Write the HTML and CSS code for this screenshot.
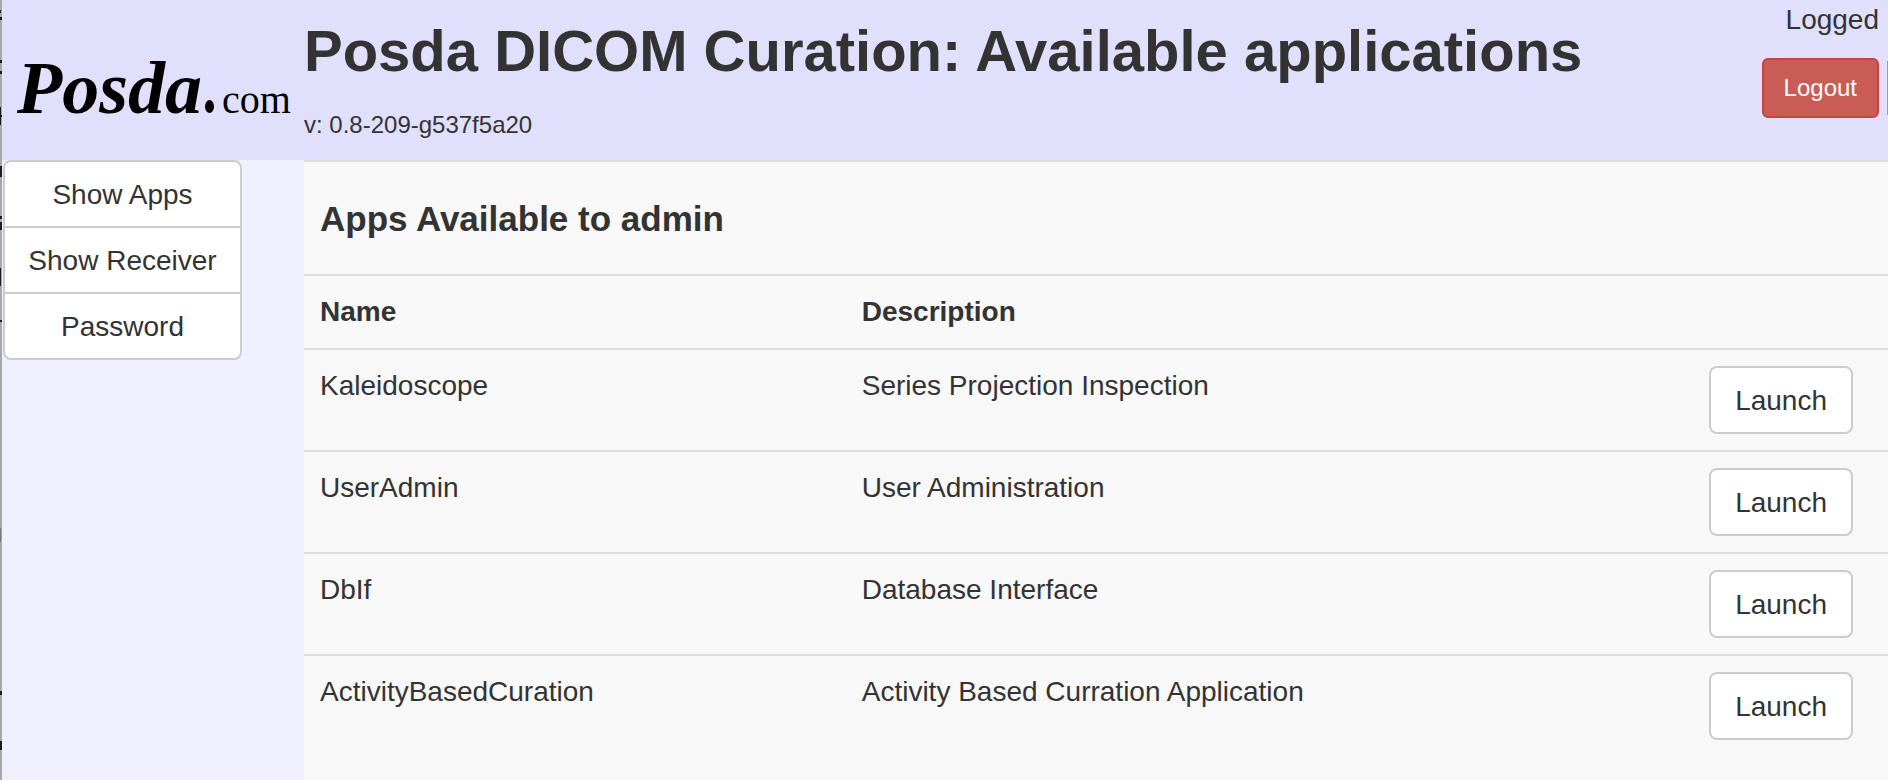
FILE: index.html
```html
<!DOCTYPE html>
<html lang="en">
<head>
<meta charset="utf-8">
<title>Posda DICOM Curation</title>
<link rel="stylesheet" href="styles.css">
</head>
<body>
<header class="header">
  <div class="logo"><span class="logo-name">Posda</span><span class="logo-dot"></span><span class="logo-tld">com</span></div>
  <div class="heading">
    <h1 class="title">Posda DICOM Curation: Available applications</h1>
    <p class="version">v: 0.8-209-g537f5a20</p>
  </div>
  <div class="account">
    <p class="account-status">Logged</p>
    <div class="account-actions">
      <button class="btn-logout" type="button">Logout</button>
      <span class="info-edge"></span>
    </div>
  </div>
</header>
<div class="body">
  <nav class="sidebar">
    <div class="menu">
      <button class="btn" type="button">Show Apps</button>
      <button class="btn" type="button">Show Receiver</button>
      <button class="btn" type="button">Password</button>
    </div>
  </nav>
  <main class="content">
    <h2 class="section-title">Apps Available to admin</h2>
    <table class="apps">
      <colgroup><col class="col-name"><col class="col-desc"><col></colgroup>
      <thead>
        <tr><th scope="col">Name</th><th scope="col">Description</th><td></td></tr>
      </thead>
      <tbody>
        <tr><td>Kaleidoscope</td><td>Series Projection Inspection</td><td><button class="btn" type="button">Launch</button></td></tr>
        <tr><td>UserAdmin</td><td>User Administration</td><td><button class="btn" type="button">Launch</button></td></tr>
        <tr><td>DbIf</td><td>Database Interface</td><td><button class="btn" type="button">Launch</button></td></tr>
        <tr><td>ActivityBasedCuration</td><td>Activity Based Curration Application</td><td><button class="btn" type="button">Launch</button></td></tr>
      </tbody>
    </table>
  </main>
</div>
<svg class="edge" width="2" height="780" viewBox="0 0 2 780" aria-hidden="true">
  <path fill="#1c1c1c" d="M0 10h1v3H0zM0 17h2v3H0zM0 60h2v3H0zM0 71h2v3H0zM0 107h1v18H0zM0 115h2v2H0zM0 166h2v11H0zM0 216h2v3H0zM0 222h2v8H0zM0 268h1v18H0zM0 320h2v2H0zM0 691h2v4H0zM0 741h2v9H0z"/>
  <path fill="#777" d="M0 528h1v14H0z"/>
</svg>
</body>
</html>
```

FILE: styles.css
```css
* { box-sizing: border-box; }

body {
  margin: 0;
  min-height: 100vh;
  display: flex;
  flex-direction: column;
  border-left: 2px solid #a8a8a8;
  background: #f0effe;
  color: #333;
  font: 28px/40px "Liberation Sans", Arial, sans-serif;
  overflow: hidden;
}

h1, h2, p { margin: 0; }

.header {
  display: flex;
  height: 160px;
  background: #e0dffc;
}

.logo {
  flex: none;
  width: 302px;
  padding: 28px 0 0 15px;
  display: flex;
  align-items: baseline;
  color: #000;
  font-family: "Liberation Serif", serif;
  line-height: 120px;
}
.logo-name { font-size: 74px; font-weight: bold; font-style: italic; }
.logo-dot {
  flex: none;
  width: 9px;
  height: 13px;
  margin: 0 8px 0 3px;
  border-radius: 50%;
  background: #000;
}
.logo-tld { font-size: 40px; }

.heading { flex: 1; padding-top: 18px; white-space: nowrap; }
.title { font-size: 58px; line-height: 66px; }
.version { padding-top: 20px; font-size: 24px; line-height: 42px; }

.account { flex: none; }
.account-status { padding-right: 9px; text-align: right; }
.account-actions {
  display: flex;
  align-items: center;
  gap: 8px;
  padding-top: 18px;
}
.info-edge { width: 1px; height: 54px; background: #5bb4d8; }

button { font: inherit; }
.btn-logout {
  padding: 10px 20px;
  border: 2px solid #c5443e;
  border-radius: 6px;
  background: #c95c54;
  color: #fff;
  font-size: 24px;
  line-height: 36px;
}
.btn {
  padding: 13px 24px 11px;
  border: 2px solid #ccc;
  border-radius: 8px;
  background: #fff;
  color: #333;
  white-space: nowrap;
}

.body { flex: 1; display: flex; }
.sidebar { flex: none; width: 302px; }
.menu {
  width: 240px;
  padding-left: 1px;
  display: flex;
  flex-direction: column;
}
.menu .btn { padding-left: 0; padding-right: 0; border-radius: 0; }
.menu .btn + .btn { margin-top: -2px; }
.menu .btn:first-child { border-radius: 8px 8px 0 0; }
.menu .btn:last-child { border-radius: 0 0 8px 8px; }

.content {
  flex: 1;
  border-top: 2px solid #ddd;
  background: #f8f8f8;
}
.section-title { padding: 37px 16px 35px; font-size: 35px; }

.apps {
  width: 100%;
  table-layout: fixed;
  border-collapse: separate;
  border-spacing: 0;
}
.col-name { width: 34.2%; }
.col-desc { width: 53.5%; }
.apps th, .apps td {
  padding: 16px;
  border-top: 2px solid #ddd;
  text-align: left;
  vertical-align: top;
}
.apps .btn { display: block; }

.edge { position: absolute; left: 0; top: 0; }
```
